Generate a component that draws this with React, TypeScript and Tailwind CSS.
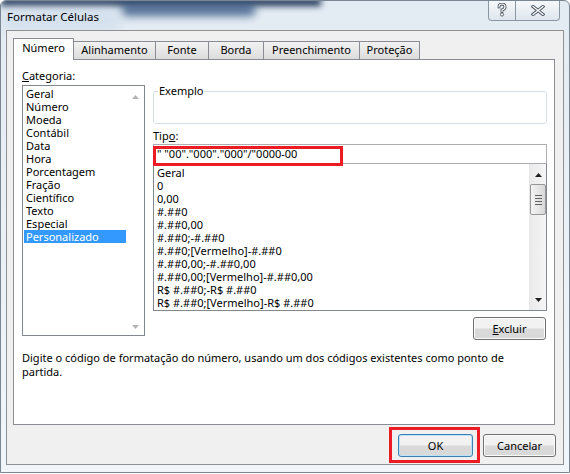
const TABS = [
  { label: "Número", w: "w-[61px]" },
  { label: "Alinhamento", w: "w-[82px]" },
  { label: "Fonte", w: "w-[53px]" },
  { label: "Borda", w: "w-[55px]" },
  { label: "Preenchimento", w: "w-[96px]" },
  { label: "Proteção", w: "w-[60px]" },
];

const CATEGORIAS = [
  "Geral",
  "Número",
  "Moeda",
  "Contábil",
  "Data",
  "Hora",
  "Porcentagem",
  "Fração",
  "Científico",
  "Texto",
  "Especial",
  "Personalizado",
];

const TIPOS = [
  "Geral",
  "0",
  "0,00",
  "#.##0",
  "#.##0,00",
  "#.##0;-#.##0",
  "#.##0;[Vermelho]-#.##0",
  "#.##0,00;-#.##0,00",
  "#.##0,00;[Vermelho]-#.##0,00",
  "R$ #.##0;-R$ #.##0",
  "R$ #.##0;[Vermelho]-R$ #.##0",
];

function ArrowUp({ color }: { color: string }) {
  return (
    <svg width="7" height="4" viewBox="0 0 7 4">
      <path d="M0 4 L3.5 0 L7 4 Z" fill={color} />
    </svg>
  );
}

function ArrowDown({ color }: { color: string }) {
  return (
    <svg width="7" height="4" viewBox="0 0 7 4">
      <path d="M0 0 L3.5 4 L7 0 Z" fill={color} />
    </svg>
  );
}

function HelpGlyph() {
  return (
    <svg width="10" height="14" viewBox="0 0 10 14">
      <g fill="none" strokeLinecap="round">
        <path d="M2 4 Q2 1 5 1 Q8 1 8 4 Q8 6 5 7 L5 8.5" stroke="#4a5561" strokeWidth="3" />
        <path d="M2 4 Q2 1 5 1 Q8 1 8 4 Q8 6 5 7 L5 8.5" stroke="#ffffff" strokeWidth="1.2" />
      </g>
      <circle cx="5" cy="11.5" r="1.6" fill="#ffffff" stroke="#4a5561" strokeWidth="0.9" />
    </svg>
  );
}

function CloseGlyph() {
  return (
    <svg width="14" height="11" viewBox="0 0 14 11">
      <g fill="none" strokeLinecap="square">
        <path d="M2 1.5 L12 9.5 M12 1.5 L2 9.5" stroke="#4a5561" strokeWidth="3.2" />
        <path d="M2 1.5 L12 9.5 M12 1.5 L2 9.5" stroke="#ffffff" strokeWidth="1.3" />
      </g>
    </svg>
  );
}

function WinButton({
  children,
  isDefault = false,
  className = "",
}: {
  children: React.ReactNode;
  isDefault?: boolean;
  className?: string;
}) {
  return (
    <button
      className={`flex h-[23px] items-center justify-center rounded-[3px] border bg-linear-to-b from-[#f2f2f2] from-45% to-[#d9d9d9] to-55% text-[11px] leading-none text-black ${
        isDefault
          ? "border-[#3c7fb1] shadow-[inset_0_0_0_1px_#bde3f8]"
          : "border-[#707070] shadow-[inset_0_0_0_1px_#fcfcfc]"
      } ${className}`}
    >
      {children}
    </button>
  );
}

export default function App() {
  return (
    <div className="h-[474px] w-[570px] bg-white font-['Noto_Sans',sans-serif] text-[11px] text-black">
      <div className="relative flex h-[473px] flex-col overflow-hidden rounded-t-[6px] border border-[#7a8793] bg-linear-to-b from-[#e3ebf3] to-[#f1f6fa] px-[5px] pb-[7px]">
        {/* blurred glass behind the caption */}
        <div className="absolute -top-[3px] left-0 h-[8px] w-[320px] bg-[#1d3557] blur-[3px]" />
        <div className="absolute left-[120px] top-[3px] h-[12px] w-[135px] rounded-full bg-[#2c4f7e] opacity-80 blur-[4px]" />
        <div className="absolute left-0 top-[8px] h-[22px] w-[120px] rounded-full bg-[#c9d9ea] opacity-60 blur-[6px]" />

        <div className="relative z-10 flex h-[29px] items-center pl-px pt-[2px] text-[11.5px]">
          Formatar Células
        </div>

        <div className="absolute -top-px right-[9px] z-10 flex h-[21px]">
          <div className="flex w-[28px] items-center justify-center rounded-bl-[4px] border border-t-0 border-[#8a96a3] bg-linear-to-b from-[#f7f9fb] to-[#dfe6ee]">
            <HelpGlyph />
          </div>
          <div className="flex w-[44px] items-center justify-center rounded-br-[4px] border border-l-0 border-t-0 border-[#8a96a3] bg-linear-to-b from-[#f7f9fb] to-[#dfe6ee]">
            <CloseGlyph />
          </div>
        </div>

        <div className="relative z-10 flex flex-1 flex-col border border-[#8f9193] bg-[#f0f0f0] pl-[6px] pr-[8px] pt-[7px]">
          <div className="flex h-[21px] items-end">
            {TABS.map((tab, i) =>
              i === 0 ? (
                <div
                  key={tab.label}
                  className={`relative z-10 -mb-px flex h-[22px] items-center justify-center border border-b-0 border-[#898c95] bg-white pb-[2px] ${tab.w}`}
                >
                  {tab.label}
                </div>
              ) : (
                <div
                  key={tab.label}
                  className={`flex h-[18px] items-center justify-center border-r border-t border-[#898c95] bg-linear-to-b from-[#f2f2f2] to-[#dcdcdc] ${tab.w}`}
                >
                  {tab.label}
                </div>
              )
            )}
          </div>

          <div className="flex h-[366px] flex-col border border-[#898c95] bg-white">
            <div className="flex gap-[8px] pl-[8px]">
              <div className="flex w-[123px] flex-col">
                <div className="pt-[9px] leading-[14px]">
                  <u>C</u>ategoria:
                </div>
                <div className="mt-[2px] flex h-[251px] border border-[#828790]">
                  <div className="flex flex-1 flex-col pt-px">
                    {CATEGORIAS.map((cat) =>
                      cat === "Personalizado" ? (
                        <div
                          key={cat}
                          className="ml-px h-[13px] w-[102px] bg-[#3399ff] pl-[2px] leading-[13px] text-white"
                        >
                          {cat}
                        </div>
                      ) : (
                        <div key={cat} className="h-[13px] pl-[3px] leading-[13px]">
                          {cat}
                        </div>
                      )
                    )}
                  </div>
                  <div className="flex w-[17px] flex-col items-center justify-between pb-[6px] pt-[9px]">
                    <ArrowUp color="#b4b4b4" />
                    <ArrowDown color="#b4b4b4" />
                  </div>
                </div>
              </div>

              <div className="flex w-[394px] flex-col">
                <fieldset className="mt-[24px] h-[40px] rounded-[3px] border border-[#d5dfe5]">
                  <legend className="ml-[4px] px-px leading-[14px]">Exemplo</legend>
                </fieldset>

                <div className="mt-[5px] leading-[14px]">
                  Tip<u>o</u>:
                </div>

                <div className="relative mt-px flex h-[20px] items-center border border-[#abadb3] pl-[3px]">
                  {'" "00"."000"."000"/"0000-00'}
                  <div className="absolute -left-px top-px h-[20px] w-[190px] border-[3px] border-[#ed1c24]" />
                </div>

                <div className="-mt-px flex h-[148px] border border-[#828790]">
                  <div className="flex flex-1 flex-col pl-[3px] pt-[2px]">
                    {TIPOS.map((t) => (
                      <div key={t} className="h-[13px] whitespace-pre leading-[13px]">
                        {t}
                      </div>
                    ))}
                  </div>
                  <div className="flex w-[17px] flex-col border-l border-[#e6e6e6] bg-linear-to-r from-[#eaeaea] to-[#f6f6f6]">
                    <div className="flex h-[18px] items-center justify-center pt-[4px]">
                      <ArrowUp color="#202020" />
                    </div>
                    <div className="mt-[2px] flex h-[31px] w-[16px] flex-col items-center justify-center gap-[2px] rounded-[2px] border border-[#979797] bg-linear-to-r from-[#f4f4f4] to-[#d8d8d8]">
                      <div className="h-px w-[7px] bg-[#606060]" />
                      <div className="h-px w-[7px] bg-[#606060]" />
                      <div className="h-px w-[7px] bg-[#606060]" />
                      <div className="h-px w-[7px] bg-[#606060]" />
                    </div>
                    <div className="mt-auto flex h-[18px] items-center justify-center pb-[2px]">
                      <ArrowDown color="#202020" />
                    </div>
                  </div>
                </div>

                <WinButton className="mr-px mt-[6px] w-[73px] self-end">
                  <span>
                    <u>E</u>xcluir
                  </span>
                </WinButton>
              </div>
            </div>

            <div className="mt-[11px] w-[490px] pl-[8px] leading-[14px]">
              Digite o código de formatação do número, usando um dos códigos existentes como ponto de
              partida.
            </div>
          </div>

          <div className="-mr-px mt-[9px] flex justify-end gap-[10px]">
            <div className="relative">
              <WinButton isDefault className="w-[75px]">
                OK
              </WinButton>
              <div className="absolute -bottom-[6px] -left-[9px] -right-[7px] -top-[7px] border-[3px] border-[#ed1c24]" />
            </div>
            <WinButton className="w-[73px]">Cancelar</WinButton>
          </div>
        </div>
      </div>
    </div>
  );
}
